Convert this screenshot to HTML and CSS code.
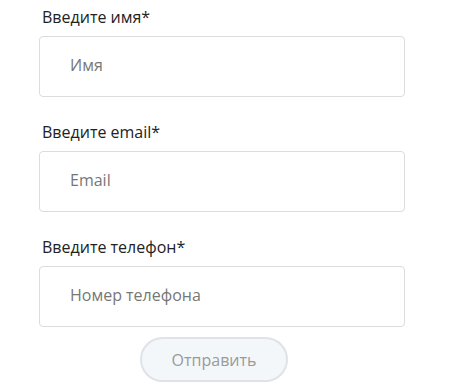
FILE: index.html
```html
<!DOCTYPE html>
<html lang="ru">
<head>
<meta charset="utf-8">
<link rel="stylesheet" href="styles.css">
</head>
<body>
<form class="form">
  <div class="field">
    <label class="label">Введите имя*</label>
    <div class="input"><span class="ph">Имя</span></div>
  </div>
  <div class="field">
    <label class="label">Введите email*</label>
    <div class="input"><span class="ph">Email</span></div>
  </div>
  <div class="field">
    <label class="label">Введите телефон*</label>
    <div class="input"><span class="ph">Номер телефона</span></div>
  </div>
  <div class="actions">
    <button type="button" class="btn">Отправить</button>
  </div>
</form>
</body>
</html>
```
FILE: styles.css
```css
html, body {
  margin: 0;
  padding: 0;
  background: #fff;
}
body {
  font-family: "Open Sans", "Noto Sans", sans-serif;
}
.form {
  width: 366px;
  margin-left: 39px;
  padding-top: 7px;
  display: flex;
  flex-direction: column;
  gap: 25px;
}
.field {
  display: flex;
  flex-direction: column;
  gap: 9px;
}
.label {
  display: block;
  font-size: 16px;
  line-height: 20px;
  color: #222;
  padding-left: 3px;
}
.input {
  box-sizing: border-box;
  height: 61px;
  border: 1px solid #dcdcdc;
  border-radius: 4px;
  display: flex;
  align-items: center;
  padding-left: 30px;
  padding-bottom: 3px;
}
.ph {
  font-size: 16px;
  color: #777;
}
.actions {
  display: flex;
  justify-content: center;
  margin-top: -15px;
}
.btn {
  box-sizing: border-box;
  width: 148px;
  height: 45px;
  border: 2px solid #dfe3e8;
  border-radius: 23px;
  background: #f4f7fa;
  font-family: "Open Sans", "Noto Sans", sans-serif;
  font-size: 16px;
  color: #9a9a9a;
  padding: 0;
  margin-right: 16px;
}
```
